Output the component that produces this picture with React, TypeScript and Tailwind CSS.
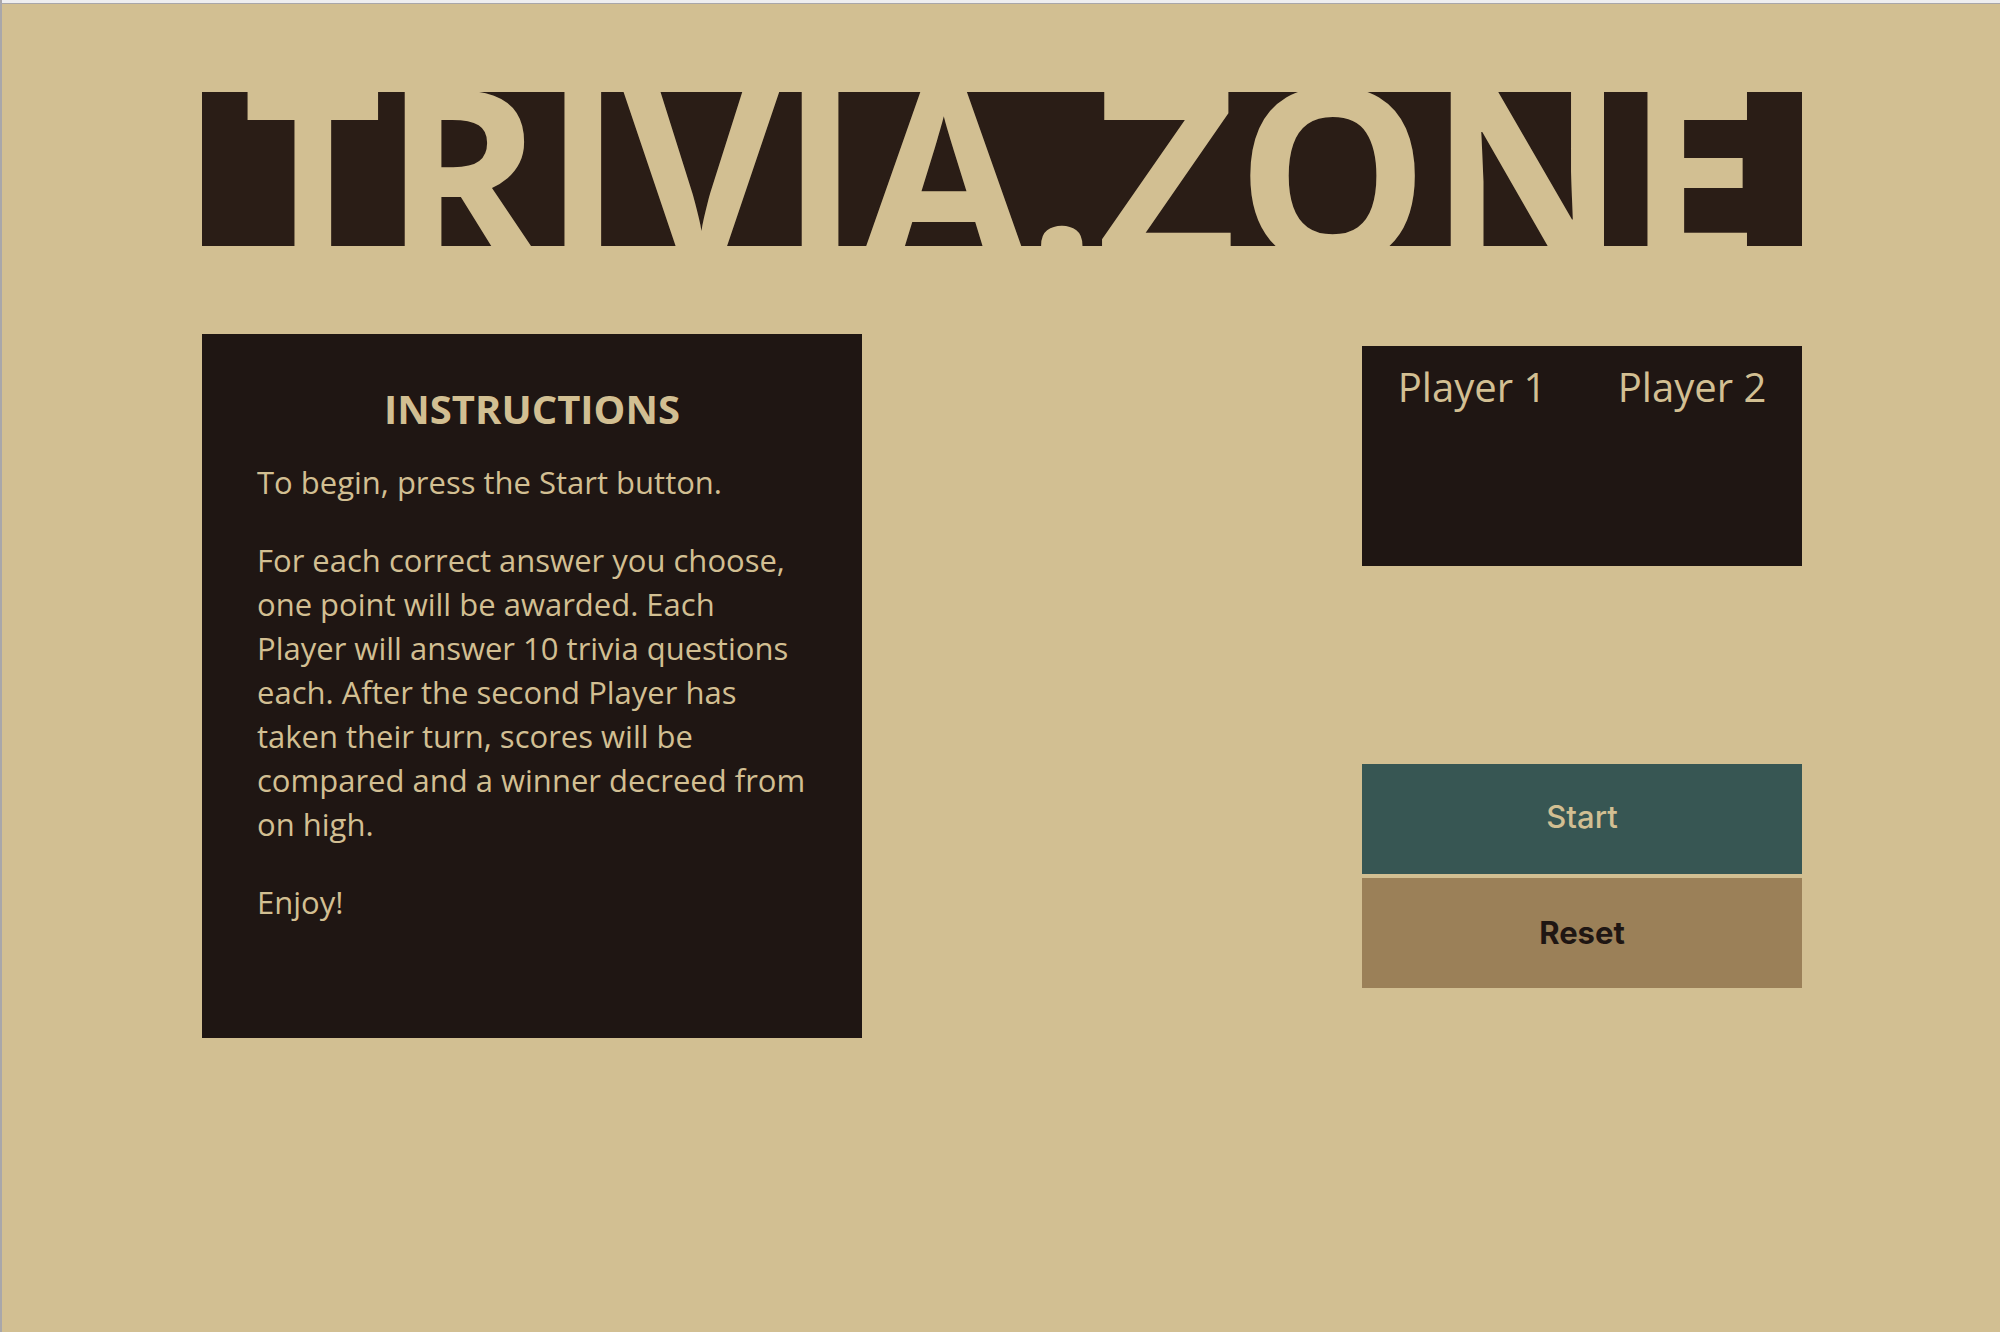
const players = ["Player 1", "Player 2"];

function Instructions() {
  return (
    <section className="w-[660px] min-h-[704px] bg-[#1f1613] p-[55px] pt-12 text-[31px] leading-[44px]">
      <h2 className="mb-6 text-center text-[40px] leading-[54px] font-bold">INSTRUCTIONS</h2>
      <p className="mb-[34px]">To begin, press the Start button.</p>
      <p className="mb-[34px]">
        For each correct answer you choose, one point will be awarded. Each Player will answer 10
        trivia questions each. After the second Player has taken their turn, scores will be compared
        and a winner decreed from on high.
      </p>
      <p>Enjoy!</p>
    </section>
  );
}

function Scoreboard() {
  return (
    <section className="grid min-h-[220px] grid-cols-2 bg-[#1f1613] pt-[14px] text-center text-[40px] leading-[54px]">
      {players.map((name) => (
        <div key={name}>{name}</div>
      ))}
    </section>
  );
}

export default function App() {
  return (
    <div className="min-h-screen border-l-2 border-[#a9a7aa] bg-[#d2bf92] font-['Open_Sans',sans-serif] text-[#d2bf92]">
      <div className="h-1 border-b border-[#a9a7aa] bg-[#eeeef0]" />
      <div className="ml-[10vw] w-[80vw] pt-[88px]">
        <h1 className="h-[154px] overflow-hidden bg-[#2a1d16] text-center text-[242px] leading-[154px] font-bold whitespace-nowrap">
          TRIVIA.ZONE
        </h1>
        <main className="mt-[88px] flex items-start justify-between">
          <Instructions />
          <aside className="mt-3 w-[440px]">
            <Scoreboard />
            <div className="mt-[198px] flex flex-col gap-1 font-['Inter',sans-serif] text-[31px]">
              <button type="button" className="h-[110px] bg-[#375653] pb-1 font-medium">
                Start
              </button>
              <button type="button" className="h-[110px] bg-[#9b8058] font-bold text-[#1f1613]">
                Reset
              </button>
            </div>
          </aside>
        </main>
      </div>
    </div>
  );
}
